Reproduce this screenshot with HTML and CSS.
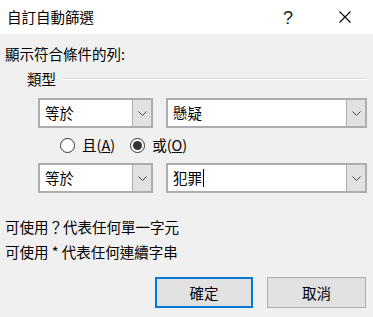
FILE: index.html
```html
<!DOCTYPE html>
<html>
	<head>
		<meta charset="utf-8" />
		<title>自訂自動篩選</title>
		<link rel="stylesheet" href="styles.css">
	</head>
	<body>
		<div class="dialog">
			<div class="titlebar">
				<span class="title">自訂自動篩選</span>
				<span class="help">?</span>
				<span class="close">
					<svg width="12" height="12" viewBox="0 0 12 12"><path d="M0.5 0.5 L11.5 11.5 M11.5 0.5 L0.5 11.5" stroke="#000" stroke-width="1.1" fill="none"/></svg>
				</span>
			</div>
			<div class="content">
				<div class="lead">顯示符合條件的列:</div>
				<div class="legend">
					<span>類型</span>
					<i class="rule"></i>
				</div>
				<div class="row">
					<div class="combo small">
						<span class="value">等於</span>
						<span class="drop"><svg width="9" height="5" viewBox="0 0 9 5"><path d="M0.5 0.5 L4.5 4.5 L8.5 0.5" stroke="#444" stroke-width="1" fill="none"/></svg></span>
					</div>
					<div class="combo wide">
						<span class="value">懸疑</span>
						<span class="drop"><svg width="9" height="5" viewBox="0 0 9 5"><path d="M0.5 0.5 L4.5 4.5 L8.5 0.5" stroke="#444" stroke-width="1" fill="none"/></svg></span>
					</div>
				</div>
				<div class="radios">
					<label class="radio"><span class="dot"></span>且(<u>A</u>)</label>
					<label class="radio on"><span class="dot"></span>或(<u>O</u>)</label>
				</div>
				<div class="row second">
					<div class="combo small">
						<span class="value">等於</span>
						<span class="drop"><svg width="9" height="5" viewBox="0 0 9 5"><path d="M0.5 0.5 L4.5 4.5 L8.5 0.5" stroke="#444" stroke-width="1" fill="none"/></svg></span>
					</div>
					<div class="combo wide">
						<span class="value">犯罪<span class="caret"></span></span>
						<span class="drop"><svg width="9" height="5" viewBox="0 0 9 5"><path d="M0.5 0.5 L4.5 4.5 L8.5 0.5" stroke="#444" stroke-width="1" fill="none"/></svg></span>
					</div>
				</div>
				<div class="hints">
					<div class="hint">可使用？代表任何單一字元</div>
					<div class="hint">可使用 * 代表任何連續字串</div>
				</div>
				<div class="actions">
					<button class="btn default">確定</button>
					<button class="btn">取消</button>
				</div>
			</div>
		</div>
	</body>
</html>
```

FILE: styles.css
```css
*{
	margin: 0;
	padding: 0;
	box-sizing: border-box;
}
body{
	width: 373px;
	height: 317px;
	overflow: hidden;
	background: #f0f0f0;
	font-family: "Noto Sans CJK TC", "Noto Sans", sans-serif;
	font-size: 14.5px;
	color: #000;
}
.dialog{
	height: 317px;
}
.titlebar{
	height: 34px;
	background: #fff;
	display: flex;
	align-items: center;
	padding-left: 7px;
}
.title{
	flex: 1;
	line-height: 20px;
}
.help{
	width: 46px;
	text-align: center;
	font-family: "Liberation Sans", sans-serif;
	font-size: 18px;
	line-height: 20px;
	color: #222;
	padding-top: 1px;
}
.close{
	width: 46px;
	margin-left: 11px;
	margin-right: 5px;
	display: flex;
	justify-content: center;
	align-items: center;
}
.content{
	padding: 0 5px;
}
.lead{
	margin-top: 10px;
	line-height: 20px;
}
.legend{
	margin-top: 5px;
	margin-left: 22px;
	height: 20px;
	line-height: 20px;
	display: flex;
	align-items: center;
}
.rule{
	flex: 1;
	height: 1px;
	margin-left: 5px;
	margin-right: 1px;
	background: #dcdcdc;
	border-bottom: 1px solid #fff;
	box-sizing: content-box;
}
.row{
	margin-top: 9px;
	margin-left: 33px;
	display: flex;
	gap: 13px;
}
.row.second{
	margin-top: 8px;
}
.combo{
	height: 30px;
	border: 2px solid #adadad;
	background: #fff;
	display: flex;
}
.combo.small{
	width: 115px;
}
.combo.wide{
	width: 201px;
}
.value{
	flex: 1;
	padding-left: 5px;
	line-height: 26px;
	display: flex;
	align-items: center;
}
.caret{
	display: inline-block;
	width: 1px;
	height: 18px;
	background: #000;
	margin-left: 1px;
}
.drop{
	width: 19px;
	background: #e1e1e1;
	border-left: 1px solid #adadad;
	display: flex;
	justify-content: center;
	align-items: center;
}
.radios{
	margin-top: 7px;
	margin-left: 55px;
	height: 20px;
	display: flex;
	align-items: center;
	gap: 15px;
}
.radio{
	display: flex;
	align-items: center;
	line-height: 20px;
}
.radio u{
	text-decoration-color: #000;
}
.dot{
	width: 15px;
	height: 15px;
	border: 1px solid #333;
	border-radius: 50%;
	background: #fff;
	margin-right: 7px;
	display: flex;
	justify-content: center;
	align-items: center;
}
.radio.on .dot::after{
	content: "";
	width: 9px;
	height: 9px;
	border-radius: 50%;
	background: #333;
}
.hints{
	margin-top: 21px;
}
.hint{
	line-height: 25px;
}
.actions{
	margin-top: 13px;
	display: flex;
	justify-content: flex-end;
	gap: 14px;
	padding-right: 2px;
}
.btn{
	width: 99px;
	height: 31px;
	border: 1px solid #adadad;
	background: #e1e1e1;
	font-family: inherit;
	font-size: 14.5px;
	color: #000;
}
.btn.default{
	width: 98px;
	border: 2px solid #0078d7;
}
```
